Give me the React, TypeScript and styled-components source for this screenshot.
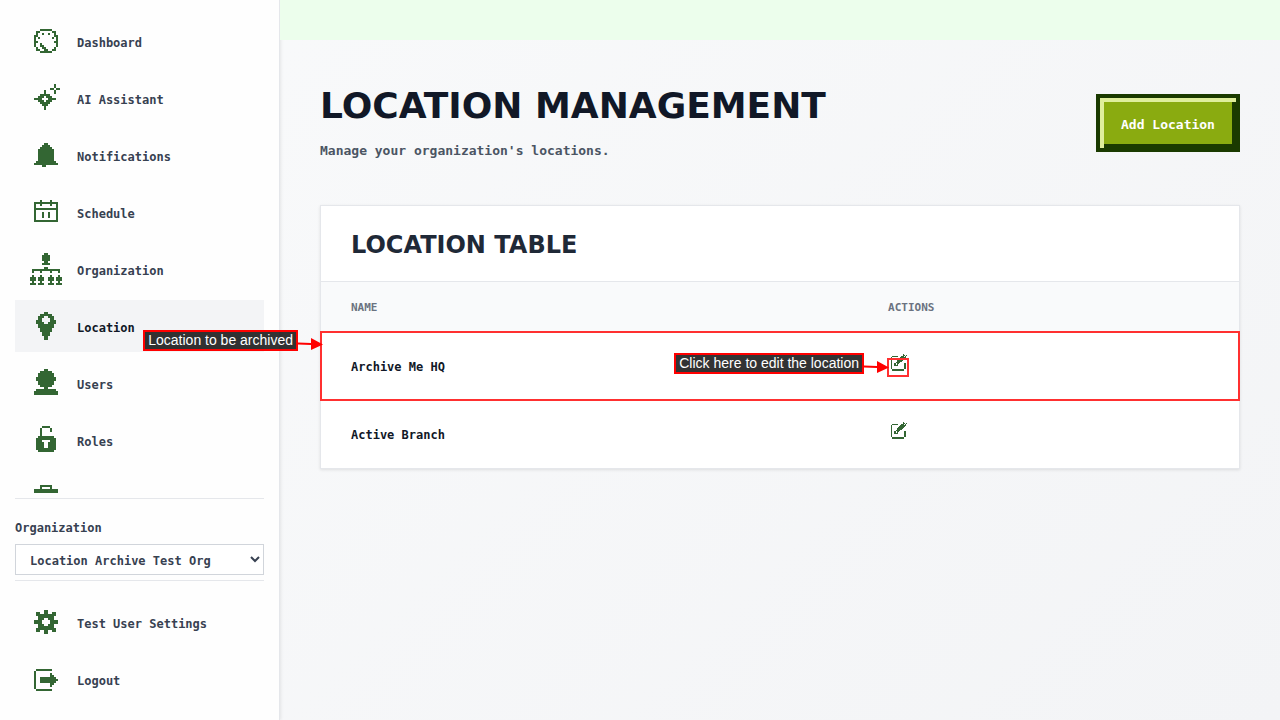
import React from "react";
import styled, { createGlobalStyle } from "styled-components";

const GlobalStyle = createGlobalStyle`
  *, *::before, *::after { box-sizing: border-box; }
  body {
    margin: 0;
    font-family: "DejaVu Sans Mono", "Liberation Mono", monospace;
    font-size: 12px;
    line-height: 20px;
    font-weight: 700;
    color: #374151;
  }
`;

/* Pixel icons: every string is a row, every "#" a filled cell. */
const ICONS: Record<string, string[]> = {
  dashboard: [
    "", "",
    ".....######",
    "...##......##",
    "...#..#..#..#",
    "..##........##",
    "..#.#......#.#",
    "..#..........#",
    "..##........##",
    "..#..#.......#",
    "..#..##......#",
    "...#..##....#",
    "...##..##..##",
    ".....######",
  ],
  assistant: [
    "",
    "............#",
    "............#",
    "..........##.##",
    ".......#....#",
    ".......#....#",
    "......###",
    "....###.###",
    "..####...####",
    "....###.###",
    "......###",
    "......###",
    ".......#",
    ".......#",
  ].map((row, y) => (y === 6 || y === 10 ? ".....#####" : row)),
  bell: [
    "", "",
    ".......##",
    "......####",
    ".....######",
    "....########",
    "....########",
    "....########",
    "....########",
    "....########",
    "....########",
    "...##########",
    "..############",
    "......##",
  ],
  calendar: [
    "", "",
    ".....#....#",
    "..############",
    "..#..#....#..#",
    "..#..........#",
    "..############",
    "..#..........#",
    "..#...#..#...#",
    "..#...#..#...#",
    "..#...#..#...#",
    "..#..........#",
    "..############",
  ],
  organization: [
    ".......##",
    "......####",
    "......####",
    "......####",
    ".......##",
    "......####",
    "",
    ".......##",
    ".##############",
    ".#...#....#...#",
    "",
    ".#...#....#...#",
    "###.###..###.###",
    "###.###..###.###",
    ".#...#....#...#",
    "###.###..###.###",
  ],
  pin: [
    "",
    ".......##",
    ".....######",
    "....###..###",
    "....##....##",
    "...###....###",
    "...####..####",
    "....########",
    "....########",
    ".....######",
    ".....######",
    "......####",
    "......####",
    ".......##",
    ".......##",
  ],
  user: [
    "",
    ".......##",
    ".....######",
    "....########",
    "....########",
    "...##########",
    "...##########",
    "....########",
    "....########",
    ".....######",
    ".......##",
    "...##########",
    "..############",
    "..############",
  ],
  lock: [
    "",
    "......####",
    ".....#....#",
    ".....#....#",
    ".....#",
    ".....#",
    "....########",
    "...##########",
    "...###....###",
    "...####..####",
    "...####..####",
    "...####..####",
    "...##########",
    "....########",
  ],
  briefcase: [
    "", "",
    ".....######",
    ".....#....#",
    "..############",
    "..############",
    "..############",
    "..############",
    "..############",
    "..############",
    "..############",
    "..############",
  ],
  gear: [
    "", "",
    ".......##",
    "...##..##..##",
    "...##########",
    "....########",
    "....###..###",
    "..####....####",
    "..####....####",
    "....###..###",
    "....########",
    "...##########",
    "...##..##..##",
    ".......##",
  ],
  logout: [
    "", "", "",
    "...########",
    "..#",
    "..#.......#",
    "..#.......##",
    "..#..########",
    "..#..#########",
    "..#..########",
    "..#.......##",
    "..#.......#",
    "..#",
    "...########",
  ],
  edit: [
    "............#",
    "............##.#",
    ".######...###.#",
    "#........######",
    "#.......######",
    "#......######",
    "#.....######",
    "#.....#####",
    "#....####",
    "#..##.##.....##",
    "#..##.#......##",
    "#..####......##",
    "#............##",
    "#............##",
    "#............##",
    ".############",
    ".############",
  ],
};

function iconPath(rows: string[]) {
  let d = "";
  rows.forEach((row, y) => {
    for (const run of row.matchAll(/#+/g)) {
      d += `M${run.index} ${y}h${run[0].length}v1h-${run[0].length}z`;
    }
  });
  return d;
}

const Svg = styled.svg`
  display: block;
  flex: none;
  fill: #336633;
  shape-rendering: crispEdges;
`;

function PixelIcon({ name }: { name: string }) {
  return (
    <Svg width="32" height="32" viewBox="0 0 16 16" aria-hidden="true">
      <path d={iconPath(ICONS[name])} />
    </Svg>
  );
}

function EditIcon() {
  return (
    <Svg width="16" height="17" viewBox="0 0 16 17" aria-hidden="true">
      <path d={iconPath(ICONS.edit)} />
    </Svg>
  );
}

const Page = styled.div`
  display: flex;
  min-height: 100vh;
  background: linear-gradient(135deg, #f9fafb, #f3f4f6);
`;

const Sidebar = styled.aside`
  display: flex;
  flex-direction: column;
  flex: none;
  gap: 5px;
  width: 280px;
  height: 100vh;
  padding: 15px;
  background: #fefefe;
  border-right: 1px solid #e5e7eb;
  box-shadow: 1px 0 3px rgba(0, 0, 0, 0.08);
`;

const NavList = styled.nav<{ $scroll?: boolean }>`
  display: flex;
  flex-direction: column;
  gap: 5px;
  flex: ${(p) => (p.$scroll ? "1 1 0" : "none")};
  min-height: 0;
  overflow: hidden;
`;

const NavItem = styled.a<{ $active?: boolean }>`
  display: flex;
  flex: none;
  align-items: center;
  gap: 15px;
  height: 52px;
  padding: 0 15px;
  color: ${(p) => (p.$active ? "#111827" : "#374151")};
  background: ${(p) => (p.$active ? "#f3f4f6" : "transparent")};
  text-decoration: none;
`;

const NavLabel = styled.span`
  padding-top: 3px;
`;

const OrgBox = styled.div`
  display: flex;
  flex-direction: column;
  gap: 6px;
  padding: 19px 0 5px;
  border-top: 1px solid #e5e7eb;
  border-bottom: 1px solid #e5e7eb;
`;

const OrgSelect = styled.select`
  width: 100%;
  height: 31px;
  padding: 2px 0 0 10px;
  border: 1px solid #d1d5db;
  border-radius: 0;
  background: #ffffff;
  color: #374151;
  font: inherit;
`;

const Footer = styled.div`
  padding-top: 10px;
`;

const Main = styled.main`
  flex: 1;
  min-width: 0;
`;

const Banner = styled.div`
  height: 40px;
  background: #ecfeec;
`;

const Content = styled.div`
  padding: 46px 40px 40px;
`;

const Header = styled.header`
  display: flex;
  align-items: flex-start;
  justify-content: space-between;
  gap: 24px;
  margin-bottom: 42px;
`;

const Title = styled.h1`
  margin: 0 0 13px;
  font-family: "DejaVu Sans", Verdana, sans-serif;
  font-size: 36px;
  line-height: 40px;
  color: #111827;
`;

const Subtitle = styled.p`
  margin: 0;
  font-size: 13px;
  line-height: 24px;
  color: #4b5563;
`;

const AddButton = styled.button`
  flex: none;
  min-width: 144px;
  height: 58px;
  margin-top: 8px;
  padding: 3px 16px 0;
  border: 4px solid #1a3a00;
  background: #8aab10;
  box-shadow: inset 4px 4px 0 #dfee9c, inset -4px -4px 0 #1a3a00;
  color: #ffffff;
  font: inherit;
  font-size: 13px;
`;

const Card = styled.section`
  background: #ffffff;
  border: 1px solid #e5e7eb;
  box-shadow: 0 1px 3px rgba(0, 0, 0, 0.1);
`;

const CardTitle = styled.h2`
  margin: 0;
  padding: 24px 30px 21px;
  border-bottom: 1px solid #e5e7eb;
  font-family: "DejaVu Sans", Verdana, sans-serif;
  font-size: 24px;
  line-height: 30px;
  color: #1f2937;
`;

const Table = styled.table`
  width: 100%;
  table-layout: fixed;
  border-collapse: collapse;
`;

const HeadCell = styled.th<{ $width?: string }>`
  width: ${(p) => p.$width ?? "auto"};
  height: 50px;
  padding: 2px 30px 0;
  background: #f9fafb;
  color: #6b7280;
  font-size: 11px;
  text-align: left;
  text-transform: uppercase;
`;

const Row = styled.tr`
  position: relative;
`;

const Cell = styled.td`
  height: 68px;
  padding: 2px 30px 0;
  color: #111827;
`;

const IconButton = styled.button`
  display: block;
  position: relative;
  width: 22px;
  height: 26px;
  padding: 0 3px;
  border: 0;
  background: none;
`;

const EditTop = styled.span`
  display: block;
  height: 26px;
`;

const RowMark = styled.span`
  position: absolute;
  inset: -1px -1px -1px;
  border: 2px solid #ff3030;
  pointer-events: none;
`;

const ButtonMark = styled.span`
  position: absolute;
  top: 4px;
  left: -1px;
  width: 22px;
  height: 19px;
  border: 2px solid #ff3030;
`;

const Callout = styled.span<{ $top: number }>`
  position: absolute;
  z-index: 2;
  right: 100%;
  top: ${(p) => p.$top}px;
  display: flex;
  align-items: center;
  pointer-events: none;
`;

const CalloutText = styled.span`
  padding: 0 3px;
  border: 2px solid #ff0000;
  background: rgba(0, 0, 0, 0.8);
  color: #ffffff;
  font-family: "Liberation Sans", Arial, sans-serif;
  font-size: 14px;
  font-weight: 400;
  line-height: 17px;
  white-space: nowrap;
`;

const Arrow = styled.svg`
  display: block;
  flex: none;
  margin: 6px -1px 0 0;
  fill: #ff0000;
`;

function Note({ top, children }: { top: number; children: React.ReactNode }) {
  return (
    <Callout $top={top}>
      <CalloutText>{children}</CalloutText>
      <Arrow width="25" height="14" viewBox="0 0 25 14" aria-hidden="true">
        <path d="M0 5.5L13 6V1l12 6.5L13 13V8L0 7.5z" />
      </Arrow>
    </Callout>
  );
}

const NAV = [
  ["Dashboard", "dashboard"],
  ["AI Assistant", "assistant"],
  ["Notifications", "bell"],
  ["Schedule", "calendar"],
  ["Organization", "organization"],
  ["Location", "pin"],
  ["Users", "user"],
  ["Roles", "lock"],
  ["", "briefcase"],
];

export default function App() {
  return (
    <Page>
      <GlobalStyle />
      <Sidebar>
        <NavList $scroll>
          {NAV.map(([label, icon]) => (
            <NavItem key={icon} href="#" $active={icon === "pin"}>
              <PixelIcon name={icon} />
              {label && <NavLabel>{label}</NavLabel>}
            </NavItem>
          ))}
        </NavList>
        <OrgBox>
          <label htmlFor="org">Organization</label>
          <OrgSelect id="org">
            <option>Location Archive Test Org</option>
          </OrgSelect>
        </OrgBox>
        <Footer>
          <NavList>
            <NavItem href="#">
              <PixelIcon name="gear" />
              <NavLabel>Test User Settings</NavLabel>
            </NavItem>
            <NavItem href="#">
              <PixelIcon name="logout" />
              <NavLabel>Logout</NavLabel>
            </NavItem>
          </NavList>
        </Footer>
      </Sidebar>
      <Main>
        <Banner />
        <Content>
          <Header>
            <div>
              <Title>LOCATION MANAGEMENT</Title>
              <Subtitle>Manage your organization's locations.</Subtitle>
            </div>
            <AddButton type="button">Add Location</AddButton>
          </Header>
          <Card>
            <CardTitle>LOCATION TABLE</CardTitle>
            <Table>
              <thead>
                <tr>
                  <HeadCell $width="58.5%">Name</HeadCell>
                  <HeadCell>Actions</HeadCell>
                </tr>
              </thead>
              <tbody>
                <Row>
                  <Cell>
                    Archive Me HQ
                    <RowMark>
                      <Note top={-3}>Location to be archived</Note>
                    </RowMark>
                  </Cell>
                  <Cell>
                    <IconButton type="button" aria-label="Edit Archive Me HQ">
                      <EditTop>
                        <EditIcon />
                      </EditTop>
                      <ButtonMark />
                      <Note top={-1}>Click here to edit the location</Note>
                    </IconButton>
                  </Cell>
                </Row>
                <Row>
                  <Cell>Active Branch</Cell>
                  <Cell>
                    <IconButton type="button" aria-label="Edit Active Branch">
                      <EditTop>
                        <EditIcon />
                      </EditTop>
                    </IconButton>
                  </Cell>
                </Row>
              </tbody>
            </Table>
          </Card>
        </Content>
      </Main>
    </Page>
  );
}
